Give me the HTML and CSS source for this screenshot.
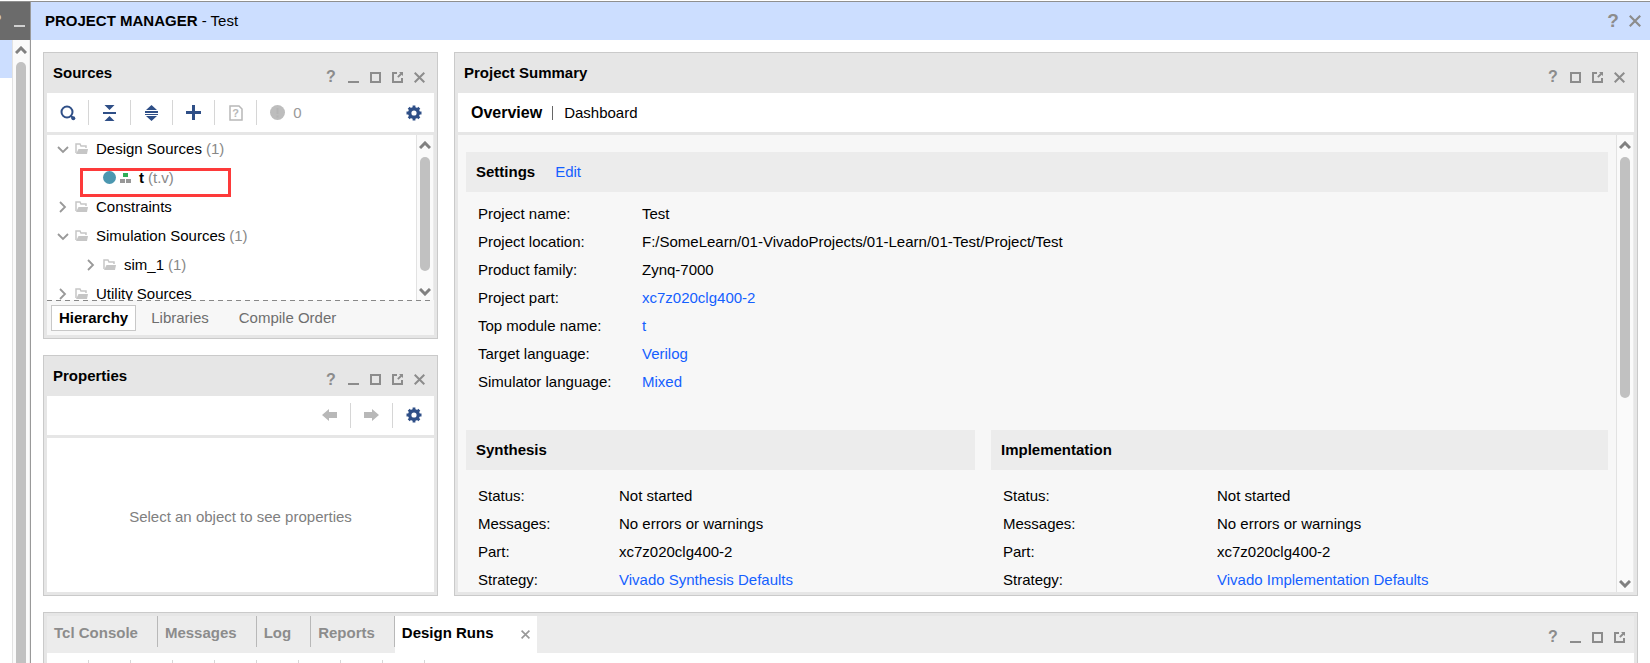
FILE: index.html
```html
<!DOCTYPE html>
<html lang="en">
<head>
    <meta charset="UTF-8">
    <meta name="viewport" content="width=device-width, initial-scale=1.0">
    <title>Project Manager - Test</title>
    <link rel="stylesheet" href="styles.css">
</head>
<body>

    <!-- Shared icons -->
    <svg class="sprite" aria-hidden="true">
        <symbol id="i-min" viewBox="0 0 11 11"><path d="M0 10H11" stroke="currentColor" stroke-width="2"/></symbol>
        <symbol id="i-max" viewBox="0 0 11 11"><path d="M1 1H10V10H1Z" fill="none" stroke="currentColor" stroke-width="2"/></symbol>
        <symbol id="i-pop" viewBox="0 0 11 11"><path d="M5 1H1V10H10V6" fill="none" stroke="currentColor" stroke-width="2"/><path d="M7 0H11V4L9.700 2.700L6.500 5.800L5.200 4.500L8.300 1.300Z" fill="currentColor"/></symbol>
        <symbol id="i-close" viewBox="0 0 11 11"><path d="M.7.7L10.300 10.300M10.300.7L.7 10.300" stroke="currentColor" stroke-width="2"/></symbol>
        <symbol id="i-up" viewBox="0 0 12 8"><path d="M1 7L6 2L11 7" fill="none" stroke="currentColor" stroke-width="3"/></symbol>
        <symbol id="i-down" viewBox="0 0 12 8"><path d="M1 1L6 6L11 1" fill="none" stroke="currentColor" stroke-width="3"/></symbol>
        <symbol id="i-open" viewBox="0 0 12 12"><path d="M1 4L6 9L11 4" fill="none" stroke="currentColor" stroke-width="1.800"/></symbol>
        <symbol id="i-shut" viewBox="0 0 12 12"><path d="M3 1L8 6L3 11" fill="none" stroke="currentColor" stroke-width="1.800"/></symbol>
        <symbol id="i-folder" viewBox="0 0 13 11"><path d="M1 10V1H5L6 3H11V5" fill="none" stroke="#c6c6c6" stroke-width="1.500"/><path d="M3.500 6H13L12 11H1Z" fill="#c6c6c6"/></symbol>
        <symbol id="i-gear" viewBox="0 0 16 16">
            <circle cx="8" cy="8" r="4.300" fill="none" stroke="currentColor" stroke-width="3.400"/>
            <path d="M8 .5V3.500M8 12.500V15.500M.5 8H3.500M12.500 8H15.500M2.700 2.700L4.700 4.700M11.300 11.300L13.300 13.300M13.300 2.700L11.300 4.700M4.700 11.300L2.700 13.300" stroke="currentColor" stroke-width="2.800"/>
        </symbol>
    </svg>

    <aside class="sidebar">
        <div class="sidebar-head">
            <button class="tool" aria-label="Help">?</button>
            <button class="tool" aria-label="Minimize"><svg width="11" height="11"><use href="#i-min"/></svg></button>
        </div>
        <div class="sidebar-body">
            <div class="sidebar-list"><div class="sidebar-selected"></div></div>
            <div class="scrollbar">
                <svg width="12" height="8"><use href="#i-up"/></svg>
                <div class="track"><div class="thumb thumb-full"></div></div>
            </div>
        </div>
    </aside>

    <main class="main">
        <header class="titlebar">
            <h1><b>PROJECT MANAGER</b> - Test</h1>
            <div class="tools">
                <button class="tool" aria-label="Help">?</button>
                <button class="tool" aria-label="Close"><svg width="12" height="12"><use href="#i-close"/></svg></button>
            </div>
        </header>

        <div class="workspace">
            <div class="left-column">
                <section class="panel sources">
                    <div class="panel-head">
                        <h2>Sources</h2>
                        <div class="tools">
                            <button class="tool" aria-label="Help">?</button>
                            <button class="tool" aria-label="Minimize"><svg width="11" height="11"><use href="#i-min"/></svg></button>
                            <button class="tool" aria-label="Maximize"><svg width="11" height="11"><use href="#i-max"/></svg></button>
                            <button class="tool" aria-label="Float"><svg width="11" height="11"><use href="#i-pop"/></svg></button>
                            <button class="tool" aria-label="Close"><svg width="11" height="11"><use href="#i-close"/></svg></button>
                        </div>
                    </div>
                    <div class="toolbar">
                        <button class="cell" aria-label="Search">
                            <svg width="16" height="16" viewBox="0 0 16 16"><circle cx="7" cy="7" r="5.500" fill="none" stroke="currentColor" stroke-width="2"/><path d="M10.500 10.500L12.500 12.500" stroke="currentColor" stroke-width="2"/><circle cx="13.300" cy="13.300" r="2" fill="currentColor"/></svg>
                        </button>
                        <button class="cell" aria-label="Collapse All">
                            <svg width="13" height="16" viewBox="0 0 13 16"><path d="M1.500 0H11.500L6.500 5ZM1.500 16H11.500L6.500 11ZM0 7H13V9H0Z" fill="currentColor"/></svg>
                        </button>
                        <button class="cell" aria-label="Expand All">
                            <svg width="13" height="16" viewBox="0 0 13 16"><path d="M6.500 0L12 5H1ZM6.500 16L12 11H1ZM0 6H13V8H0ZM0 9H13V10H0Z" fill="currentColor"/></svg>
                        </button>
                        <button class="cell" aria-label="Add Sources">
                            <svg width="15" height="15" viewBox="0 0 15 15"><path d="M7.500 0V15M0 7.500H15" stroke="currentColor" stroke-width="3"/></svg>
                        </button>
                        <button class="cell missing" aria-label="Missing files" disabled>
                            <svg width="14" height="16" viewBox="0 0 14 16"><path d="M1 1H10L13 4V15H1Z" fill="none" stroke="currentColor" stroke-width="1.500"/></svg>
                            <span>?</span>
                        </button>
                        <button class="cell messages" aria-label="Messages" disabled>
                            <svg width="15" height="15" viewBox="0 0 15 15"><circle cx="7.500" cy="7.500" r="7.500" fill="#bdbdbd"/><path d="M7.500 3V9M7.500 10.500V12.500" stroke="#b5b5b5" stroke-width="2"/></svg>
                            <span>0</span>
                        </button>
                        <button class="cell gear" aria-label="Settings"><svg width="16" height="16"><use href="#i-gear"/></svg></button>
                    </div>
                    <div class="panel-body">
                        <ul class="tree">
                            <li><svg width="12" height="12"><use href="#i-open"/></svg><svg class="folder" width="13" height="11"><use href="#i-folder"/></svg>Design Sources <span>(1)</span></li>
                            <li class="file">
                                <svg width="13" height="13" viewBox="0 0 13 13"><circle cx="6.500" cy="6.500" r="6.500" fill="#4b97b0"/></svg>
                                <svg width="11" height="10" viewBox="0 0 11 10"><path d="M3 0H8V4H3Z" fill="#2fae59"/><path d="M0 6H5V10H0ZM6 6H11V10H6Z" fill="#989898"/></svg>
                                <b>t</b> <span>(t.v)</span>
                            </li>
                            <li><svg width="12" height="12"><use href="#i-shut"/></svg><svg class="folder" width="13" height="11"><use href="#i-folder"/></svg>Constraints</li>
                            <li><svg width="12" height="12"><use href="#i-open"/></svg><svg class="folder" width="13" height="11"><use href="#i-folder"/></svg>Simulation Sources <span>(1)</span></li>
                            <li class="child"><svg width="12" height="12"><use href="#i-shut"/></svg><svg class="folder" width="13" height="11"><use href="#i-folder"/></svg>sim_1 <span>(1)</span></li>
                            <li><svg width="12" height="12"><use href="#i-shut"/></svg><svg class="folder" width="13" height="11"><use href="#i-folder"/></svg>Utility Sources</li>
                        </ul>
                        <div class="marker"></div>
                        <div class="scrollbar">
                            <svg width="12" height="8"><use href="#i-up"/></svg>
                            <div class="track"><div class="thumb thumb-tree"></div></div>
                            <svg width="12" height="8"><use href="#i-down"/></svg>
                        </div>
                    </div>
                    <svg class="dashes" width="100%" height="1"><path d="M0 .5H4000" stroke="#888" stroke-dasharray="5 4"/></svg>
                    <div class="view-tabs">
                        <button class="active">Hierarchy</button>
                        <button>Libraries</button>
                        <button>Compile Order</button>
                    </div>
                </section>

                <section class="panel properties">
                    <div class="panel-head">
                        <h2>Properties</h2>
                        <div class="tools">
                            <button class="tool" aria-label="Help">?</button>
                            <button class="tool" aria-label="Minimize"><svg width="11" height="11"><use href="#i-min"/></svg></button>
                            <button class="tool" aria-label="Maximize"><svg width="11" height="11"><use href="#i-max"/></svg></button>
                            <button class="tool" aria-label="Float"><svg width="11" height="11"><use href="#i-pop"/></svg></button>
                            <button class="tool" aria-label="Close"><svg width="11" height="11"><use href="#i-close"/></svg></button>
                        </div>
                    </div>
                    <div class="toolbar toolbar-right">
                        <button class="cell" aria-label="Back" disabled>
                            <svg width="15" height="12" viewBox="0 0 15 12"><path d="M0 6L7 0V3H15V9H7V12Z" fill="currentColor"/></svg>
                        </button>
                        <button class="cell" aria-label="Forward" disabled>
                            <svg width="15" height="12" viewBox="0 0 15 12"><path d="M15 6L8 0V3H0V9H8V12Z" fill="currentColor"/></svg>
                        </button>
                        <button class="cell gear" aria-label="Settings"><svg width="16" height="16"><use href="#i-gear"/></svg></button>
                    </div>
                    <div class="panel-body empty">Select an object to see properties</div>
                </section>
            </div>

            <section class="panel summary">
                <div class="panel-head">
                    <h2>Project Summary</h2>
                    <div class="tools">
                        <button class="tool" aria-label="Help">?</button>
                        <button class="tool" aria-label="Maximize"><svg width="11" height="11"><use href="#i-max"/></svg></button>
                        <button class="tool" aria-label="Float"><svg width="11" height="11"><use href="#i-pop"/></svg></button>
                        <button class="tool" aria-label="Close"><svg width="11" height="11"><use href="#i-close"/></svg></button>
                    </div>
                </div>
                <div class="toolbar summary-tabs">
                    <button class="active">Overview</button>
                    <button>Dashboard</button>
                </div>
                <div class="panel-body">
                    <div class="report">
                        <div class="bar"><h3>Settings</h3><a href="#">Edit</a></div>
                        <table class="settings">
                            <tr><th>Project name:</th><td>Test</td></tr>
                            <tr><th>Project location:</th><td>F:/SomeLearn/01-VivadoProjects/01-Learn/01-Test/Project/Test</td></tr>
                            <tr><th>Product family:</th><td>Zynq-7000</td></tr>
                            <tr><th>Project part:</th><td><a href="#">xc7z020clg400-2</a></td></tr>
                            <tr><th>Top module name:</th><td><a href="#">t</a></td></tr>
                            <tr><th>Target language:</th><td><a href="#">Verilog</a></td></tr>
                            <tr><th>Simulator language:</th><td><a href="#">Mixed</a></td></tr>
                        </table>
                        <div class="runs">
                            <div>
                                <div class="bar"><h3>Synthesis</h3></div>
                                <table class="synthesis">
                                    <tr><th>Status:</th><td>Not started</td></tr>
                                    <tr><th>Messages:</th><td>No errors or warnings</td></tr>
                                    <tr><th>Part:</th><td>xc7z020clg400-2</td></tr>
                                    <tr><th>Strategy:</th><td><a href="#">Vivado Synthesis Defaults</a></td></tr>
                                </table>
                            </div>
                            <div>
                                <div class="bar"><h3>Implementation</h3></div>
                                <table class="implementation">
                                    <tr><th>Status:</th><td>Not started</td></tr>
                                    <tr><th>Messages:</th><td>No errors or warnings</td></tr>
                                    <tr><th>Part:</th><td>xc7z020clg400-2</td></tr>
                                    <tr><th>Strategy:</th><td><a href="#">Vivado Implementation Defaults</a></td></tr>
                                </table>
                            </div>
                        </div>
                    </div>
                    <div class="scrollbar">
                        <svg width="12" height="8"><use href="#i-up"/></svg>
                        <div class="track"><div class="thumb thumb-report"></div></div>
                        <svg width="12" height="8"><use href="#i-down"/></svg>
                    </div>
                </div>
            </section>

            <section class="panel console">
                <div class="console-tabs">
                    <button>Tcl Console</button>
                    <button>Messages</button>
                    <button>Log</button>
                    <button>Reports</button>
                    <div class="active">
                        <button>Design Runs</button>
                        <button class="close-tab" aria-label="Close Design Runs"><svg width="9" height="9"><use href="#i-close"/></svg></button>
                    </div>
                    <div class="tools">
                        <button class="tool" aria-label="Help">?</button>
                        <button class="tool" aria-label="Minimize"><svg width="11" height="11"><use href="#i-min"/></svg></button>
                        <button class="tool" aria-label="Maximize"><svg width="11" height="11"><use href="#i-max"/></svg></button>
                        <button class="tool" aria-label="Float"><svg width="11" height="11"><use href="#i-pop"/></svg></button>
                    </div>
                </div>
                <div class="toolbar">
                    <div class="cell"></div>
                    <div class="cell"></div>
                    <div class="cell"></div>
                    <div class="cell"></div>
                    <div class="cell"></div>
                    <div class="cell"></div>
                    <div class="cell"></div>
                    <div class="cell"></div>
                    <div class="cell"></div>
                </div>
            </section>
        </div>
    </main>

</body>
</html>
```
FILE: styles.css
```css
* {
    box-sizing: border-box;
}
body {
    display: flex;
    height: 100vh;
    margin: 0;
    padding-top: 1px;
    overflow: hidden;
    background-color: #fff;
    color: #000;
    font-family: "Liberation Sans", Arial, sans-serif;
    font-size: 15px;
    line-height: 20px;
}
h1, h2, h3 {
    margin: 0;
    font-size: 15px;
}
h1 {
    font-weight: normal;
}
a {
    color: #1460ff;
    text-decoration: none;
}
button {
    padding: 0;
    border: none;
    background: none;
    color: inherit;
    font: inherit;
    cursor: pointer;
}
svg {
    display: block;
    flex: none;
}
.sprite {
    position: absolute;
    width: 0;
    height: 0;
}

/* Left strip */
.sidebar {
    display: flex;
    flex-direction: column;
    width: 31px;
    flex: none;
    border-top: 1px solid #8f8f8f;
    border-right: 1px solid #999;
}
.sidebar-head {
    display: flex;
    justify-content: flex-end;
    align-items: center;
    height: 38px;
    flex: none;
    overflow: hidden;
    background-color: #6b6b6b;
}
.sidebar-head .tool {
    color: #d0d0d0;
}
.sidebar-body {
    display: flex;
    flex: 1;
    min-height: 0;
    overflow: hidden;
}
.sidebar-list {
    flex: 1;
}
.sidebar-selected {
    height: 38px;
    background-color: #ccdeff;
}

/* Title bar */
.main {
    display: flex;
    flex-direction: column;
    flex: 1;
    min-width: 0;
}
.titlebar {
    display: flex;
    justify-content: space-between;
    align-items: center;
    height: 39px;
    flex: none;
    padding: 0 4px 0 14px;
    border-top: 1px solid #8f8f8f;
    background-color: #ccdeff;
}
.titlebar .tool {
    font-size: 19px;
}
.tools {
    display: flex;
}
.tool {
    display: flex;
    justify-content: center;
    align-items: center;
    width: 22px;
    height: 22px;
    flex: none;
    color: #8c8c8c;
    font-size: 16px;
    font-weight: bold;
}

/* Panels */
.workspace {
    display: grid;
    grid-template-columns: 395px 1fr;
    grid-template-rows: minmax(0, 1fr) 51px;
    gap: 16px;
    flex: 1;
    min-height: 0;
    padding: 12px 12px 0;
}
.left-column {
    display: flex;
    flex-direction: column;
    gap: 16px;
    min-height: 0;
}
.panel {
    display: flex;
    flex-direction: column;
    min-width: 0;
    min-height: 0;
    padding: 0 3px 3px;
    border: 1px solid #cacaca;
    background-color: #e6e6e6;
}
.sources {
    flex: 287 1 0;
}
.properties {
    flex: 241 1 0;
}
.panel-head {
    display: flex;
    justify-content: space-between;
    align-items: center;
    height: 40px;
    flex: none;
    padding: 0 4px 0 6px;
}
.panel-head .tools {
    padding-top: 8px;
}
.toolbar {
    display: flex;
    align-items: center;
    height: 39px;
    flex: none;
    margin-bottom: 3px;
    background-color: #fff;
}
.toolbar-right {
    justify-content: flex-end;
}
.cell {
    display: flex;
    justify-content: center;
    align-items: center;
    width: 42px;
    height: 25px;
    border-right: 1px solid #d6d6d6;
    color: #2f4f87;
}
.cell:disabled {
    color: #b8b8b8;
}
.missing {
    position: relative;
}
.missing span {
    position: absolute;
    font-size: 11px;
    font-weight: bold;
}
.messages {
    gap: 8px;
    width: 58px;
    border-right: none;
}
.messages span {
    color: #999;
}
.gear {
    width: 41px;
    margin-left: auto;
    border-right: none;
}
.toolbar-right .gear {
    margin-left: 0;
}
.panel-body {
    position: relative;
    display: flex;
    flex: 1;
    min-height: 0;
    overflow: hidden;
    background-color: #fff;
}
.empty {
    justify-content: center;
    align-items: center;
    padding-top: 4px;
    color: #808080;
}

/* Scrollbars */
.scrollbar {
    display: flex;
    flex-direction: column;
    align-items: center;
    width: 18px;
    flex: none;
    padding: 6px 0 4px;
    border-left: 1px solid #e2e2e2;
    border-right: 1px solid #ececec;
    background-color: #fafafa;
    color: #808080;
}
.track {
    flex: 1;
    margin: 8px 0;
}
.thumb {
    width: 10px;
    border-radius: 5px;
    background-color: #c1c1c1;
}
.thumb-full {
    height: 110%;
}
.thumb-tree {
    height: 93%;
}
.thumb-report {
    height: 58%;
}

/* Source tree */
.tree {
    flex: 1;
    margin: -1px 0 0;
    padding: 0;
    list-style: none;
}
.tree li {
    display: flex;
    align-items: center;
    gap: 4px;
    height: 29px;
    padding-left: 10px;
}
.tree .folder {
    margin: 0 4px 0 2px;
}
.tree .child {
    padding-left: 38px;
}
.tree .file {
    padding-left: 56px;
}
.tree .file b {
    margin-left: 4px;
}
.tree li svg {
    color: #999;
}
.tree span {
    color: #888;
}
.marker {
    position: absolute;
    top: 33px;
    left: 33px;
    width: 151px;
    height: 29px;
    border: 3px solid #fd3a3a;
}
.dashes {
    background-color: #f7f7f7;
}
.view-tabs {
    display: flex;
    align-items: center;
    height: 34px;
    flex: none;
    padding-left: 4px;
    background-color: #f7f7f7;
}
.view-tabs button {
    height: 26px;
    padding: 0 15px;
    color: #6e6e6e;
}
.view-tabs .active {
    padding: 0 7px;
    border: 1px solid #c8c8c8;
    background-color: #fff;
    color: #000;
    font-weight: bold;
}

/* Project summary */
.summary .panel-body {
    background-color: #f7f7f7;
}
.summary-tabs {
    padding-left: 13px;
}
.summary-tabs button {
    line-height: 14px;
}
.summary-tabs .active {
    padding-right: 10px;
    margin-right: 11px;
    border-right: 1px solid #666;
    font-size: 16px;
    font-weight: bold;
}
.report {
    flex: 1;
    padding: 17px 8px 0;
}
.bar {
    display: flex;
    align-items: center;
    gap: 20px;
    height: 40px;
    padding-left: 10px;
    background-color: #ececec;
}
.report table {
    width: 100%;
    table-layout: fixed;
    border-collapse: collapse;
}
.report th, .report td {
    height: 28px;
    padding: 0;
    text-align: left;
    font-weight: normal;
}
.report th {
    padding-left: 12px;
}
.settings {
    margin: 8px 0 34px;
}
.settings th {
    width: 176px;
}
.runs {
    display: grid;
    grid-template-columns: 509fr 617fr;
    gap: 16px;
}
.runs table {
    margin-top: 12px;
}
.synthesis th {
    width: 153px;
}
.implementation th {
    width: 226px;
}

/* Console */
.console {
    grid-column: 1 / -1;
    padding: 3px 3px 0;
    border-bottom: none;
    overflow: hidden;
}
.console-tabs {
    display: flex;
    height: 37px;
    flex: none;
    background-color: #ececec;
    color: #8c8c8c;
    font-weight: bold;
}
.console-tabs > button {
    height: 31px;
    padding: 2px 19px 0 7px;
    border-right: 1px solid #b8b8b8;
}
.console-tabs .active {
    display: flex;
    align-items: center;
    gap: 27px;
    padding: 0 7px 4px;
    background-color: #fff;
    color: #000;
}
.close-tab {
    padding-top: 4px;
    color: #999;
}
.console .tools {
    margin-left: auto;
    padding: 10px 4px 0 0;
}
.console .toolbar {
    margin: 0;
}
```
